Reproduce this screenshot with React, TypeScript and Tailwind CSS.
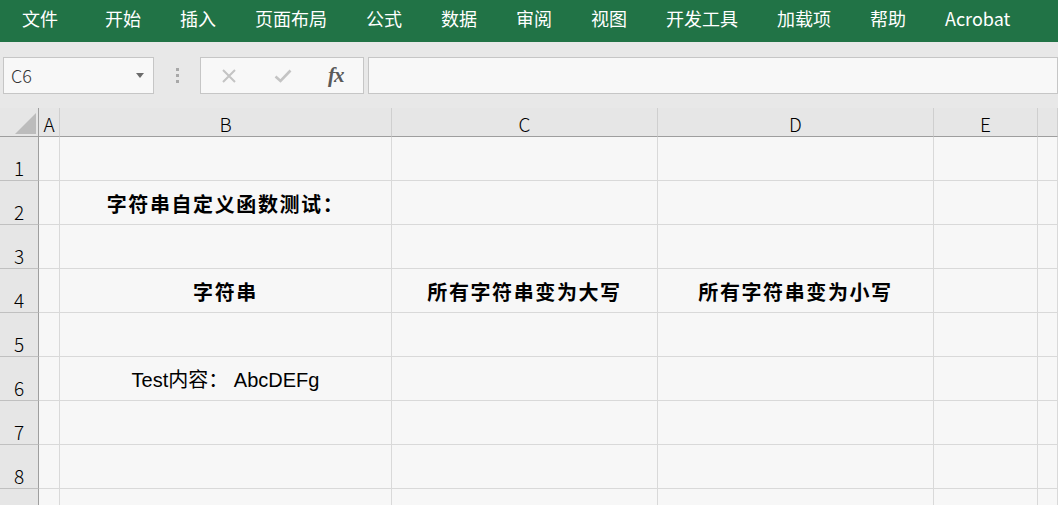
const menus = [
  "文件",
  "开始",
  "插入",
  "页面布局",
  "公式",
  "数据",
  "审阅",
  "视图",
  "开发工具",
  "加载项",
  "帮助",
  "Acrobat",
];

const font = { fontFamily: '"Noto Sans CJK SC", "Microsoft YaHei", sans-serif' };
const cellFont = { fontFamily: '"Liberation Sans", "Noto Sans CJK SC", sans-serif' };

const cols = ["A", "B", "C", "D", "E", ""];

// cell contents keyed by row then column index (0 = A)
const cells: Record<number, Record<number, { text: string; bold?: boolean }>> = {
  2: { 1: { text: "字符串自定义函数测试：", bold: true } },
  4: {
    1: { text: "字符串", bold: true },
    2: { text: "所有字符串变为大写", bold: true },
    3: { text: "所有字符串变为小写", bold: true },
  },
  6: { 1: { text: "Test内容： AbcDEFg" } },
};

const rows = [1, 2, 3, 4, 5, 6, 7, 8, 9];

export default function App() {
  return (
    <div
      className="w-[1058px] h-[505px] overflow-hidden bg-[#e8e8e8] text-black"
      style={font}
    >
      {/* ribbon tabs */}
      <div className="h-[42px] bg-[#217346] flex items-center pb-[5px] pl-[22px] gap-[39px] text-white text-[18px]">
        {menus.map((m, i) => (
          <span key={m} className={i === 0 ? "mr-[8px]" : ""}>
            {m}
          </span>
        ))}
      </div>

      {/* formula bar */}
      <div className="h-[66px] pt-[15px] flex items-start">
        <div className="ml-[3px] w-[151px] h-[37px] bg-[#f8f8f8] border border-[#c6c6c6] flex items-center justify-between pl-[7px] pr-[9px]">
          <span className="text-[18px] font-light text-[#333]">C6</span>
          <svg width="8" height="5" viewBox="0 0 8 5">
            <path d="M0 0H8L4 5Z" fill="#6b6b6b" />
          </svg>
        </div>
        <div className="w-[46px] h-[37px] flex flex-col items-center justify-center gap-[3px]">
          <span className="w-[3px] h-[3px] bg-[#a8a8a8]" />
          <span className="w-[3px] h-[3px] bg-[#a8a8a8]" />
          <span className="w-[3px] h-[3px] bg-[#a8a8a8]" />
        </div>
        <div className="w-[164px] h-[37px] bg-[#f8f8f8] border border-[#c6c6c6] flex items-center">
          <svg width="16" height="16" viewBox="0 0 16 16" className="ml-[20px]">
            <path d="M2 2L14 14M14 2L2 14" stroke="#c4c4c4" strokeWidth="2" />
          </svg>
          <svg width="18" height="14" viewBox="0 0 18 14" className="ml-[37px]">
            <path d="M1.5 7.5L6.5 12L16.5 1.5" stroke="#c4c4c4" strokeWidth="2.6" fill="none" />
          </svg>
          <span
            className="ml-[36px] text-[21px] italic font-bold text-[#5a5a5a] tracking-[-1px]"
            style={{ fontFamily: '"Liberation Serif", serif' }}
          >
            fx
          </span>
        </div>
        <div className="ml-[4px] flex-1 h-[37px] bg-[#f8f8f8] border border-[#c6c6c6]" />
      </div>

      {/* sheet */}
      <div className="grid grid-cols-[39px_21px_332px_266px_276px_104px_1fr] grid-rows-[29px_repeat(9,44px)]">
        {/* corner */}
        <div className="border-r border-b border-[#9e9e9e] bg-[#e6e6e6] relative">
          <svg width="21" height="21" viewBox="0 0 21 21" className="absolute left-[15px] top-[5px]">
            <path d="M21 0V21H0Z" fill="#bcbcbc" />
          </svg>
        </div>
        {cols.map((c) => (
          <div
            key={c || "F"}
            className="bg-[#e6e6e6] border-r border-r-[#cfcfcf] border-b border-b-[#9e9e9e] flex items-center justify-center text-[19px] font-light leading-none pt-[3px]"
          >
            {c}
          </div>
        ))}

        {rows.map((r) => (
          <div key={r} className="contents">
            <div className="bg-[#e6e6e6] border-r border-r-[#9e9e9e] border-b border-b-[#c0c0c0] flex items-end justify-center text-[19px] font-light leading-[24px]">
              {r < 9 ? r : ""}
            </div>
            {cols.map((c, ci) => {
              const cell = cells[r]?.[ci];
              return (
                <div
                  key={ci}
                  className="bg-[#f7f7f7] border-r border-b border-[#d9d9d9] flex items-end justify-center pb-[8px] leading-[24px] whitespace-pre"
                >
                  {cell &&
                    (cell.bold ? (
                      <span className="text-[20px] font-bold tracking-[1.6px]">
                        {cell.text}
                      </span>
                    ) : (
                      <span className="text-[20px]" style={cellFont}>
                        {cell.text}
                      </span>
                    ))}
                </div>
              );
            })}
          </div>
        ))}
      </div>
    </div>
  );
}
